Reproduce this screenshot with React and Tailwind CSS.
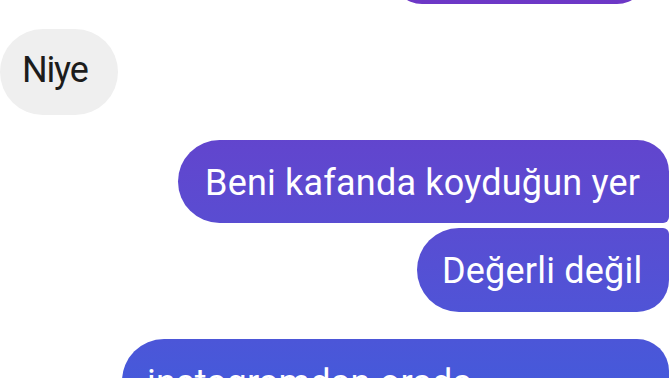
export default function App() {
  const grad = "bg-fixed bg-linear-to-b from-[#6d37c6] to-[#4659da]";
  return (
    <div className="w-[672px] h-[378px] overflow-hidden bg-white flex flex-col" style={{ fontFamily: "Roboto, 'Noto Sans', sans-serif" }}>
      <div className={`self-end mr-[25px] mt-[-36px] w-[255px] h-[40px] shrink-0 rounded-b-[30px] ${grad}`} />
      <div className="mt-[25px] ml-[0px] w-[118px] h-[86px] shrink-0 rounded-[43px] bg-[#efefef] flex items-center pl-[22px] text-[#1c1c1c] text-[36px] tracking-[-1.2px] pb-[4px]">
        Niye
      </div>
      <div className={`self-end mr-[3px] mt-[25px] w-[491px] h-[83px] shrink-0 rounded-tl-[42px] rounded-bl-[42px] rounded-tr-[32px] rounded-br-[6px] ${grad} flex items-center pl-[27px] pt-[2px] text-white text-[36px] tracking-[0.2px]`}>
        Beni kafanda koyduğun yer
      </div>
      <div className={`self-end mr-[3px] mt-[5px] w-[252px] h-[84px] shrink-0 rounded-tl-[42px] rounded-bl-[42px] rounded-tr-[6px] rounded-br-[32px] ${grad} flex items-center pl-[25px] pt-[2px] text-white text-[36px] tracking-[0.2px]`}>
        Değerli değil
      </div>
      <div className={`self-end mr-[3px] mt-[27px] w-[547px] h-[84px] shrink-0 rounded-tl-[42px] rounded-bl-[42px] rounded-tr-[32px] rounded-br-[6px] ${grad} flex items-center pl-[25px] pt-[4px] text-white text-[36px] tracking-[0.2px]`}>
        instagramdan orada
      </div>
    </div>
  );
}
